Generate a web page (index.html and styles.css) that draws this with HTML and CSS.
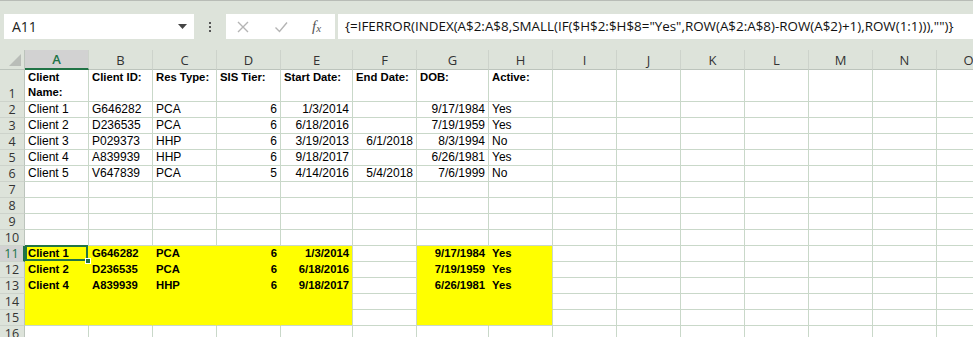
FILE: index.html
```html
<!DOCTYPE html>
<html lang="en">
<head>
    <meta charset="UTF-8">
    <title>Active clients - Excel</title>
    <link rel="stylesheet" href="styles.css">
</head>
<body>
    <div class="topline"></div>

    <div class="fbar">
        <div class="namebox">
            <span>A11</span>
            <svg class="caret" width="9" height="5" viewBox="0 0 9 5"><path d="M0 0h9L4.5 5z"/></svg>
        </div>
        <div class="grip"><i></i><i></i><i></i></div>
        <div class="fbtns">
            <svg class="btn" width="14" height="14" viewBox="0 0 14 14"><path d="M2 2l10 10M12 2L2 12"/></svg>
            <svg class="btn" width="14" height="14" viewBox="0 0 14 14"><path d="M1.5 7.5l4 4L13 2.5"/></svg>
            <span class="fx">f<sub>x</sub></span>
        </div>
        <div class="formula">{=IFERROR(INDEX(A$2:A$8,SMALL(IF($H$2:$H$8="Yes",ROW(A$2:A$8)-ROW(A$2)+1),ROW(1:1))),"")}</div>
    </div>

    <div class="sheet">
        <div class="row hdr">
            <div class="corner"><svg width="12" height="12" viewBox="0 0 12 12"><path d="M12 0v12H0z"/></svg></div>
            <div class="ch sel">A</div><div class="ch">B</div><div class="ch">C</div><div class="ch">D</div>
            <div class="ch">E</div><div class="ch">F</div><div class="ch">G</div><div class="ch">H</div>
            <div class="ch">I</div><div class="ch">J</div><div class="ch">K</div><div class="ch">L</div>
            <div class="ch">M</div><div class="ch">N</div><div class="ch">O</div>
        </div>

        <div class="row r1">
            <div class="rh">1</div>
            <div class="c b">Client Name:</div><div class="c b">Client ID:</div><div class="c b">Res Type:</div><div class="c b">SIS Tier:</div>
            <div class="c b">Start Date:</div><div class="c b">End Date:</div><div class="c b">DOB:</div><div class="c b">Active:</div>
            <div class="c"></div><div class="c"></div><div class="c"></div><div class="c"></div><div class="c"></div><div class="c"></div><div class="c"></div>
        </div>
        <div class="row">
            <div class="rh">2</div>
            <div class="c">Client 1</div><div class="c">G646282</div><div class="c">PCA</div><div class="c n">6</div>
            <div class="c n">1/3/2014</div><div class="c n"></div><div class="c n">9/17/1984</div><div class="c">Yes</div>
            <div class="c"></div><div class="c"></div><div class="c"></div><div class="c"></div><div class="c"></div><div class="c"></div><div class="c"></div>
        </div>
        <div class="row">
            <div class="rh">3</div>
            <div class="c">Client 2</div><div class="c">D236535</div><div class="c">PCA</div><div class="c n">6</div>
            <div class="c n">6/18/2016</div><div class="c n"></div><div class="c n">7/19/1959</div><div class="c">Yes</div>
            <div class="c"></div><div class="c"></div><div class="c"></div><div class="c"></div><div class="c"></div><div class="c"></div><div class="c"></div>
        </div>
        <div class="row">
            <div class="rh">4</div>
            <div class="c">Client 3</div><div class="c">P029373</div><div class="c">HHP</div><div class="c n">6</div>
            <div class="c n">3/19/2013</div><div class="c n">6/1/2018</div><div class="c n">8/3/1994</div><div class="c">No</div>
            <div class="c"></div><div class="c"></div><div class="c"></div><div class="c"></div><div class="c"></div><div class="c"></div><div class="c"></div>
        </div>
        <div class="row">
            <div class="rh">5</div>
            <div class="c">Client 4</div><div class="c">A839939</div><div class="c">HHP</div><div class="c n">6</div>
            <div class="c n">9/18/2017</div><div class="c n"></div><div class="c n">6/26/1981</div><div class="c">Yes</div>
            <div class="c"></div><div class="c"></div><div class="c"></div><div class="c"></div><div class="c"></div><div class="c"></div><div class="c"></div>
        </div>
        <div class="row">
            <div class="rh">6</div>
            <div class="c">Client 5</div><div class="c">V647839</div><div class="c">PCA</div><div class="c n">5</div>
            <div class="c n">4/14/2016</div><div class="c n">5/4/2018</div><div class="c n">7/6/1999</div><div class="c">No</div>
            <div class="c"></div><div class="c"></div><div class="c"></div><div class="c"></div><div class="c"></div><div class="c"></div><div class="c"></div>
        </div>
        <div class="row">
            <div class="rh">7</div>
            <div class="c"></div><div class="c"></div><div class="c"></div><div class="c"></div><div class="c"></div>
            <div class="c"></div><div class="c"></div><div class="c"></div><div class="c"></div><div class="c"></div>
            <div class="c"></div><div class="c"></div><div class="c"></div><div class="c"></div><div class="c"></div>
        </div>
        <div class="row">
            <div class="rh">8</div>
            <div class="c"></div><div class="c"></div><div class="c"></div><div class="c"></div><div class="c"></div>
            <div class="c"></div><div class="c"></div><div class="c"></div><div class="c"></div><div class="c"></div>
            <div class="c"></div><div class="c"></div><div class="c"></div><div class="c"></div><div class="c"></div>
        </div>
        <div class="row">
            <div class="rh">9</div>
            <div class="c"></div><div class="c"></div><div class="c"></div><div class="c"></div><div class="c"></div>
            <div class="c"></div><div class="c"></div><div class="c"></div><div class="c"></div><div class="c"></div>
            <div class="c"></div><div class="c"></div><div class="c"></div><div class="c"></div><div class="c"></div>
        </div>
        <div class="row">
            <div class="rh">10</div>
            <div class="c"></div><div class="c"></div><div class="c"></div><div class="c"></div><div class="c"></div>
            <div class="c"></div><div class="c"></div><div class="c"></div><div class="c"></div><div class="c"></div>
            <div class="c"></div><div class="c"></div><div class="c"></div><div class="c"></div><div class="c"></div>
        </div>

        <!-- results of the array formula -->
        <div class="row">
            <div class="rh sel">11</div>
            <div class="c y b active">Client 1<span class="cursor"><i class="handle"></i></span></div>
            <div class="c y b">G646282</div><div class="c y b">PCA</div><div class="c y b n">6</div>
            <div class="c y b n end">1/3/2014</div><div class="c"></div><div class="c y b n">9/17/1984</div><div class="c y b end">Yes</div>
            <div class="c"></div><div class="c"></div><div class="c"></div><div class="c"></div><div class="c"></div><div class="c"></div><div class="c"></div>
        </div>
        <div class="row">
            <div class="rh">12</div>
            <div class="c y b">Client 2</div><div class="c y b">D236535</div><div class="c y b">PCA</div><div class="c y b n">6</div>
            <div class="c y b n end">6/18/2016</div><div class="c"></div><div class="c y b n">7/19/1959</div><div class="c y b end">Yes</div>
            <div class="c"></div><div class="c"></div><div class="c"></div><div class="c"></div><div class="c"></div><div class="c"></div><div class="c"></div>
        </div>
        <div class="row">
            <div class="rh">13</div>
            <div class="c y b">Client 4</div><div class="c y b">A839939</div><div class="c y b">HHP</div><div class="c y b n">6</div>
            <div class="c y b n end">9/18/2017</div><div class="c"></div><div class="c y b n">6/26/1981</div><div class="c y b end">Yes</div>
            <div class="c"></div><div class="c"></div><div class="c"></div><div class="c"></div><div class="c"></div><div class="c"></div><div class="c"></div>
        </div>
        <div class="row">
            <div class="rh">14</div>
            <div class="c y"></div><div class="c y"></div><div class="c y"></div><div class="c y"></div><div class="c y end"></div>
            <div class="c"></div><div class="c y"></div><div class="c y end"></div>
            <div class="c"></div><div class="c"></div><div class="c"></div><div class="c"></div><div class="c"></div><div class="c"></div><div class="c"></div>
        </div>
        <div class="row last-y">
            <div class="rh">15</div>
            <div class="c y"></div><div class="c y"></div><div class="c y"></div><div class="c y"></div><div class="c y end"></div>
            <div class="c"></div><div class="c y"></div><div class="c y end"></div>
            <div class="c"></div><div class="c"></div><div class="c"></div><div class="c"></div><div class="c"></div><div class="c"></div><div class="c"></div>
        </div>
        <div class="row">
            <div class="rh">16</div>
            <div class="c"></div><div class="c"></div><div class="c"></div><div class="c"></div><div class="c"></div>
            <div class="c"></div><div class="c"></div><div class="c"></div><div class="c"></div><div class="c"></div>
            <div class="c"></div><div class="c"></div><div class="c"></div><div class="c"></div><div class="c"></div>
        </div>
    </div>
</body>
</html>
```

FILE: styles.css
```css
* {
    box-sizing: border-box;
    margin: 0;
    padding: 0;
}

body {
    width: 973px;
    height: 337px;
    overflow: hidden;
    background: #dde3da; /* toolbar grey */
    font-family: "Liberation Sans", Arial, sans-serif;
}

.topline {
    height: 1px;
    background: #b8bcb6;
}

/* formula bar */
.fbar {
    display: flex;
    height: 49px;
    padding-top: 13px;
}

.namebox {
    display: flex;
    align-items: center;
    justify-content: space-between;
    width: 190px;
    height: 25px;
    margin-left: 4px;
    padding: 0 7px 0 8px;
    background: #fff;
    font-family: "Open Sans", sans-serif;
    font-size: 14px;
    color: #222;
}

.caret {
    fill: #444;
}

.grip {
    display: flex;
    flex-direction: column;
    align-items: center;
    justify-content: center;
    gap: 2px;
    width: 32px;
    height: 25px;
}

.grip i {
    width: 2px;
    height: 2px;
    background: #555;
}

.fbtns {
    display: flex;
    align-items: center;
    width: 109px;
    height: 25px;
    padding-left: 10px;
    gap: 24px;
    background: #fff;
}

.btn {
    fill: none;
    stroke: #b4b4b4;
    stroke-width: 1.4;
}

.fx {
    font-family: "Liberation Serif", serif;
    font-style: italic;
    font-size: 15px;
    color: #555;
}

.fx sub {
    font-size: 11px;
    vertical-align: -1px;
}

.formula {
    flex: 1;
    height: 25px;
    margin-left: 3px;
    padding-left: 7px;
    background: #fff;
    font-family: "Open Sans", sans-serif;
    font-size: 13.4px;
    line-height: 25px;
    color: #111;
    white-space: nowrap;
}

/* grid */
.sheet {
    background: #fff;
}

.row {
    display: grid;
    grid-template-columns: 25px 64px 64px 64px 64px 72px 64px 72px 64px 64px 64px 64px 64px 64px 64px 64px;
    height: 16px;
}

.row.hdr {
    height: 20px;
    background: #dde3da;
}

.row.r1 {
    height: 32px;
}

.corner {
    display: flex;
    align-items: flex-end;
    justify-content: flex-end;
    padding: 0 3px 3px 0;
    border-right: 1px solid #bcc4bc;
    border-bottom: 1px solid #bcc4bc;
}

.corner svg {
    fill: #b9bdb8;
}

.ch {
    display: flex;
    align-items: center;
    justify-content: center;
    border-right: 1px solid #cdd3cb;
    border-bottom: 1px solid #bcc4bc;
    font-family: "Open Sans", sans-serif;
    font-size: 13px;
    color: #333;
}

.ch.sel {
    background: #d2d2d2;
    border-bottom: 2px solid #217346;
    color: #217346;
    font-weight: 600;
}

.rh {
    display: flex;
    align-items: flex-end;
    justify-content: center;
    background: #dde3da;
    border-right: 1px solid #bcc4bc;
    border-bottom: 1px solid #cdd3cb;
    font-family: "Open Sans", sans-serif;
    font-size: 12.5px;
    line-height: 15px;
    color: #333;
}

.rh.sel {
    background: #d2d2d2;
    border-right: 2px solid #217346;
    color: #217346;
}

.c {
    border-right: 1px solid #c9d8c9;
    border-bottom: 1px solid #c9d8c9;
    padding: 0 3px 0 3px;
    font-size: 12px;
    line-height: 15px;
    color: #000;
    white-space: nowrap;
    overflow: hidden;
}

.r1 .c {
    white-space: normal;
}

.c.b {
    font-weight: bold;
    font-size: 11.3px;
}

.c.n {
    text-align: right;
}

/* highlighted output block */
.c.y {
    background: #ffff00;
    border-color: #ffff00;
}

.c.y.end {
    border-right-color: #c9d8c9;
}

.last-y .c.y {
    border-bottom-color: #c9d8c9;
}

.c.active {
    position: relative;
    overflow: visible;
    z-index: 2;
}

.cursor {
    position: absolute;
    top: -1px;
    left: 0;
    right: 0;
    bottom: 0;
    border: 2px solid #217346;
}

.handle {
    position: absolute;
    right: -5px;
    bottom: -5px;
    width: 6px;
    height: 6px;
    background: #217346;
    border: 1px solid #fff;
}
```
